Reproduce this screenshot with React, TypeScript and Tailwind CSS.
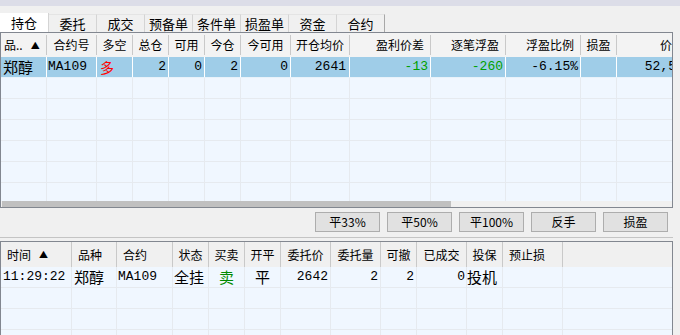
const cjk = "font-['Noto_Sans_CJK_SC',sans-serif]";
const mono = "font-['Liberation_Mono','Noto_Sans_CJK_SC',monospace]";

const tabs = ['持仓', '委托', '成交', '预备单', '条件单', '损盈单', '资金', '合约'];

// top grid columns (width includes the right separator)
const topCols = [
  { w: 'w-[46px]', label: '品..', head: 'justify-start pl-[3px]' },
  { w: 'w-[50px]', label: '合约号', head: 'justify-center' },
  { w: 'w-[36px]', label: '多空', head: 'justify-center' },
  { w: 'w-[36px]', label: '总仓', head: 'justify-center' },
  { w: 'w-[36px]', label: '可用', head: 'justify-center' },
  { w: 'w-[36px]', label: '今仓', head: 'justify-center' },
  { w: 'w-[50px]', label: '今可用', head: 'justify-center' },
  { w: 'w-[59px]', label: '开仓均价', head: 'justify-center' },
  { w: 'w-[81px]', label: '盈利价差', head: 'justify-end pr-[6px]' },
  { w: 'w-[75px]', label: '逐笔浮盈', head: 'justify-end pr-[6px]' },
  { w: 'w-[75px]', label: '浮盈比例', head: 'justify-end pr-[6px]' },
  { w: 'w-[36px]', label: '损盈', head: 'justify-center' },
  { w: 'w-[60px]', label: '价', head: 'justify-end pr-[4px]' },
];

const position = [
  { t: '郑醇', c: `${cjk} text-[15px] justify-start pl-[2px]` },
  { t: 'MA109', c: `${mono} justify-start pl-[1px]` },
  { t: '多', c: `${cjk} text-[14px] text-[#ff0000] justify-start pl-[3px]` },
  { t: '2', c: `${mono} justify-end pr-[2px]` },
  { t: '0', c: `${mono} justify-end pr-[2px]` },
  { t: '2', c: `${mono} justify-end pr-[2px]` },
  { t: '0', c: `${mono} justify-end pr-[2px]` },
  { t: '2641', c: `${mono} justify-end pr-[3px]` },
  { t: '-13', c: `${mono} text-[#00a000] justify-end pr-[2px]` },
  { t: '-260', c: `${mono} text-[#00a000] justify-end pr-[2px]` },
  { t: '-6.15%', c: `${mono} justify-end pr-[2px]` },
  { t: '', c: '' },
  { t: '52,5', c: `${mono} justify-end -mr-[6px]` },
];

const orderCols = [
  { w: 'w-[71px]', label: '时间', head: 'justify-start pl-[6px]' },
  { w: 'w-[45px]', label: '品种', head: 'justify-start pl-[6px]' },
  { w: 'w-[56px]', label: '合约', head: 'justify-start pl-[6px]' },
  { w: 'w-[36px]', label: '状态', head: 'justify-center' },
  { w: 'w-[36px]', label: '买卖', head: 'justify-center' },
  { w: 'w-[36px]', label: '开平', head: 'justify-center' },
  { w: 'w-[50px]', label: '委托价', head: 'justify-center' },
  { w: 'w-[50px]', label: '委托量', head: 'justify-center' },
  { w: 'w-[36px]', label: '可撤', head: 'justify-center' },
  { w: 'w-[50px]', label: '已成交', head: 'justify-center' },
  { w: 'w-[36px]', label: '投保', head: 'justify-center' },
  { w: 'w-[60px]', label: '预止损', head: 'justify-start pl-[6px]' },
];

const order = [
  { t: '11:29:22', c: `${mono} justify-start pl-[2px]` },
  { t: '郑醇', c: `${cjk} text-[15px] justify-start pl-[2px]` },
  { t: 'MA109', c: `${mono} justify-start pl-[1px]` },
  { t: '全挂', c: `${cjk} text-[15px] justify-start pl-[1px]` },
  { t: '卖', c: `${cjk} text-[15px] text-[#008a00] justify-center` },
  { t: '平', c: `${cjk} text-[15px] justify-center` },
  { t: '2642', c: `${mono} justify-end pr-[2px]` },
  { t: '2', c: `${mono} justify-end pr-[2px]` },
  { t: '2', c: `${mono} justify-end pr-[2px]` },
  { t: '0', c: `${mono} justify-end pr-[1px]` },
  { t: '投机', c: `${cjk} text-[15px] justify-start` },
  { t: '', c: '' },
];

const buttons = ['平33%', '平50%', '平100%', '反手', '损盈'];

function Arrow() {
  return <span className="ml-[8px] text-[9px] leading-none text-black">▲</span>;
}

export default function App() {
  return (
    <div className={`w-[680px] h-[335px] overflow-hidden bg-[#f0f0f0] text-black ${cjk}`}>
      <div className="h-[6px] bg-[#dcdde8]" />
      <div className="h-[7px]" />

      {/* tabs */}
      <div className="flex items-end h-[19px]">
        {tabs.map((t, i) => (
          <div
            key={t}
            className={
              i === 0
                ? 'w-[49px] h-[19px] bg-white border-r border-[#d4d4d4] flex items-center justify-center text-[13px]'
                : i === tabs.length - 1
                ? 'w-[48px] h-[18px] bg-[#f0f0f0] border-t border-r border-t-[#e4e4e4] border-r-[#a8a8a8] flex items-center justify-center text-[13px]'
                : 'w-[48px] h-[18px] bg-[#f0f0f0] border-t border-r border-t-[#e4e4e4] border-r-[#d4d4d4] flex items-center justify-center text-[13px]'
            }
          >
            {t}
          </div>
        ))}
      </div>

      {/* positions grid */}
      <div className="w-[673px] h-[176px] border border-[#828790] bg-[#f0f7ff] flex flex-col overflow-hidden">
        <div className="flex h-[24px] bg-[#f3f3f3] py-[2px] shrink-0">
          {topCols.map((c, i) => (
            <div
              key={c.label}
              className={`${c.w} shrink-0 flex items-center text-[12px] border-r border-[#c9c9c9] ${c.head}`}
            >
              {c.label}
              {i === 0 && <Arrow />}
            </div>
          ))}
        </div>
        <div className="flex-1 overflow-hidden">
          <div className="flex h-[21px] bg-[#9fcde8] border-b border-[#e8f2fa]">
            {topCols.map((c, i) => (
              <div
                key={c.label}
                className={`${c.w} shrink-0 flex items-center text-[13px] border-r border-white whitespace-nowrap ${position[i].c}`}
              >
                {position[i].t}
              </div>
            ))}
          </div>
          {[0, 1, 2, 3, 4, 5].map((r) => (
            <div key={r} className="flex h-[21px] border-b border-[#e6eaef]">
              {topCols.map((c) => (
                <div key={c.label} className={`${c.w} shrink-0 border-r border-[#e6eaef]`} />
              ))}
            </div>
          ))}
        </div>
        <div className="h-[6px] shrink-0 bg-[#f0f0f0] flex">
          <div className="ml-[1px] w-[449px] bg-[#c0c0c0]" />
        </div>
      </div>

      {/* action buttons */}
      <div className="flex justify-end gap-[7px] pr-[12px] mt-[4px]">
        {buttons.map((b) => (
          <div
            key={b}
            className="w-[65px] h-[20px] bg-[#e1e1e1] border border-[#adadad] flex items-center justify-center text-[12px]"
          >
            {b}
          </div>
        ))}
      </div>
      <div className="mt-[5px] w-[673px] h-[1px] bg-[#c4c4c4]" />

      {/* orders grid */}
      <div className="mt-[3px] w-[673px] h-[100px] border-t border-x border-[#828790] bg-[#f0f7ff] overflow-hidden">
        <div className="flex h-[25px] bg-[#f0f0f0]">
          {orderCols.map((c, i) => (
            <div
              key={c.label}
              className={`${c.w} shrink-0 flex items-center text-[12px] border-r border-[#c9c9c9] ${c.head}`}
            >
              {c.label}
              {i === 0 && <Arrow />}
            </div>
          ))}
        </div>
        <div className="flex h-[21px] border-b border-[#e6eaef]">
          {orderCols.map((c, i) => (
            <div
              key={c.label}
              className={`${c.w} shrink-0 flex items-center text-[13px] border-r border-[#e6eaef] whitespace-nowrap ${order[i].c}`}
            >
              {order[i].t}
            </div>
          ))}
        </div>
        {[0, 1, 2].map((r) => (
          <div key={r} className="flex h-[21px] border-b border-[#e6eaef]">
            {orderCols.map((c) => (
              <div key={c.label} className={`${c.w} shrink-0 border-r border-[#e6eaef]`} />
            ))}
          </div>
        ))}
      </div>
    </div>
  );
}
